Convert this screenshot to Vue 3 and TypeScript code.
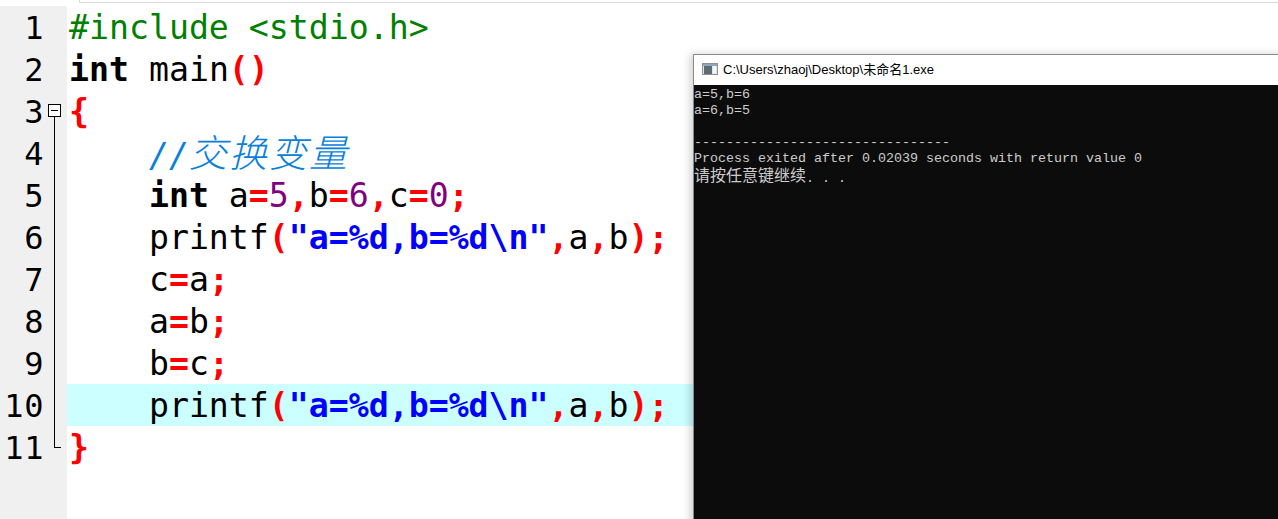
<script setup lang="ts">
type Seg = { t: string; c: string };
const k = (t: string): Seg => ({ t, c: 'kw' });
const p = (t: string): Seg => ({ t, c: 'pl' });
const s = (t: string): Seg => ({ t, c: 'sym' });
const n = (t: string): Seg => ({ t, c: 'num' });
const st = (t: string): Seg => ({ t, c: 'str' });
const printfLine: Seg[] = [p('    printf'), s('('), st('"a=%d,b=%d\\n"'), s(','), p('a'), s(','), p('b'), s(');')];
const lines: Seg[][] = [
  [{ t: '#include <stdio.h>', c: 'pre' }],
  [k('int'), p(' main'), s('()')],
  [s('{')],
  [p('    '), { t: '//', c: 'com' }, { t: '交换变量', c: 'com cn' }],
  [p('    '), k('int'), p(' a'), s('='), n('5'), s(','), p('b'), s('='), n('6'), s(','), p('c'), s('='), n('0'), s(';')],
  printfLine,
  [p('    c'), s('='), p('a'), s(';')],
  [p('    a'), s('='), p('b'), s(';')],
  [p('    b'), s('='), p('c'), s(';')],
  printfLine,
  [s('}')],
];
const consoleLines = ['a=5,b=6', 'a=6,b=5', '', '--------------------------------', 'Process exited after 0.02039 seconds with return value 0'];
</script>

<template>
  <div class="page">
    <div class="topstrip"></div>
    <div class="editor">
      <div class="gutter">
        <div v-for="(_, i) in lines" :key="i" class="num-row">{{ i + 1 }}</div>
      </div>
      <div class="fold">
        <div class="fold-line"></div>
        <div class="fold-end"></div>
        <div class="fold-box"></div>
      </div>
      <div class="code">
        <div v-for="(line, i) in lines" :key="i" class="code-row" :class="{ active: i === 9 }">
          <span v-for="(seg, j) in line" :key="j" :class="seg.c">{{ seg.t }}</span>
        </div>
      </div>
    </div>
    <div class="window">
      <div class="titlebar">
        <svg class="appicon" width="16" height="16" viewBox="0 0 16 16">
          <rect x="0.5" y="2.5" width="15" height="11" fill="#dfe6ea" stroke="#8c9296" />
          <rect x="1" y="3" width="14" height="2" fill="#8fa6b8" />
          <rect x="2" y="5" width="8" height="8" fill="#5d6b73" />
          <rect x="11" y="5" width="3" height="7" fill="#f4f6f7" />
        </svg>
        <span class="title">C:\Users\zhaoj\Desktop\未命名1.exe</span>
      </div>
      <div class="console">
        <div v-for="(l, i) in consoleLines" :key="i" class="con-line">{{ l }}</div>
        <div class="con-line last"><span class="cjk">请按任意键继续</span>. . .</div>
      </div>
    </div>
  </div>
</template>

<style>
html, body { margin: 0; background: #fff; }
</style>

<style scoped>
.page {
  position: relative;
  width: 1278px;
  height: 519px;
  overflow: hidden;
  background: #fff;
}
.topstrip {
  height: 2px;
  margin-left: 79px;
  border-bottom: 1px solid #d9d9d9;
  border-left: 1px solid #d9d9d9;
  box-sizing: content-box;
}
.editor {
  display: flex;
  height: 516px;
  margin-top: 3px;
  font-family: "DejaVu Sans Mono", monospace;
  font-size: 32px;
}
.gutter {
  width: 44px;
  flex: none;
  background: #f0f0f0;
  text-align: right;
  color: #000;
}
.num-row { height: 42px; line-height: 44px; letter-spacing: 0.6px; }
.fold {
  position: relative;
  flex: none;
  width: 23px;
  background: #f0f0f0;
}
.fold-box {
  position: absolute;
  left: 4px;
  top: 98px;
  width: 11px;
  height: 11px;
  border: 1px solid #000;
  background: linear-gradient(#000, #000) center / 7px 1px no-repeat, #fff;
}
.fold-line {
  position: absolute;
  left: 10px;
  top: 111px;
  width: 1px;
  height: 331px;
  background: #000;
}
.fold-end {
  position: absolute;
  left: 10px;
  top: 441px;
  width: 7px;
  height: 1px;
  background: #000;
}
.code { flex: 1; min-width: 0; }
.code-row {
  height: 42px;
  line-height: 44px;
  white-space: pre;
  padding-left: 2px;
  font-size: 33.2px;
}
.active { background: #ccffff; }
.pre { color: #008000; }
.kw { color: #000; font-weight: 700; }
.pl { color: #000; }
.sym { color: #ff0000; font-weight: 700; }
.num { color: #800080; }
.str { color: #0000ff; font-weight: 700; }
.com {
  color: #0a7fdc;
  font-style: italic;
  font-family: "DejaVu Sans Mono", "Noto Sans CJK SC", monospace;
}
.cn {
  font-family: "Noto Sans CJK SC", sans-serif;
  font-weight: 300;
  font-size: 38px;
  letter-spacing: 2px;
  line-height: 1;
}
.window {
  position: absolute;
  left: 693px;
  top: 54px;
  width: 600px;
  height: 480px;
  border: 1px solid #8a8a8a;
  box-sizing: border-box;
  box-shadow: -3px 0 8px rgba(0, 0, 0, 0.18);
  display: flex;
  flex-direction: column;
  background: #fff;
}
.titlebar {
  height: 30px;
  flex: none;
  display: flex;
  align-items: center;
  gap: 5px;
  padding-left: 8px;
  padding-bottom: 3px;
  box-sizing: border-box;
  background: #fff;
}
.title {
  font-family: "Liberation Sans", "Noto Sans CJK SC", sans-serif;
  font-size: 13px;
  color: #000;
  white-space: pre;
}
.appicon { flex: none; }
.console {
  flex: 1;
  background: #0c0c0c;
  color: #cccccc;
  font-family: "Liberation Mono", "Noto Sans CJK SC", monospace;
  font-size: 13.33px;
  padding-top: 2px;
}
.con-line { height: 16px; line-height: 16px; white-space: pre; }
.last { margin-top: -1px; }
.cjk { font-size: 16px; font-family: "Noto Sans CJK SC", sans-serif; font-weight: 400; vertical-align: 1px; }
</style>
